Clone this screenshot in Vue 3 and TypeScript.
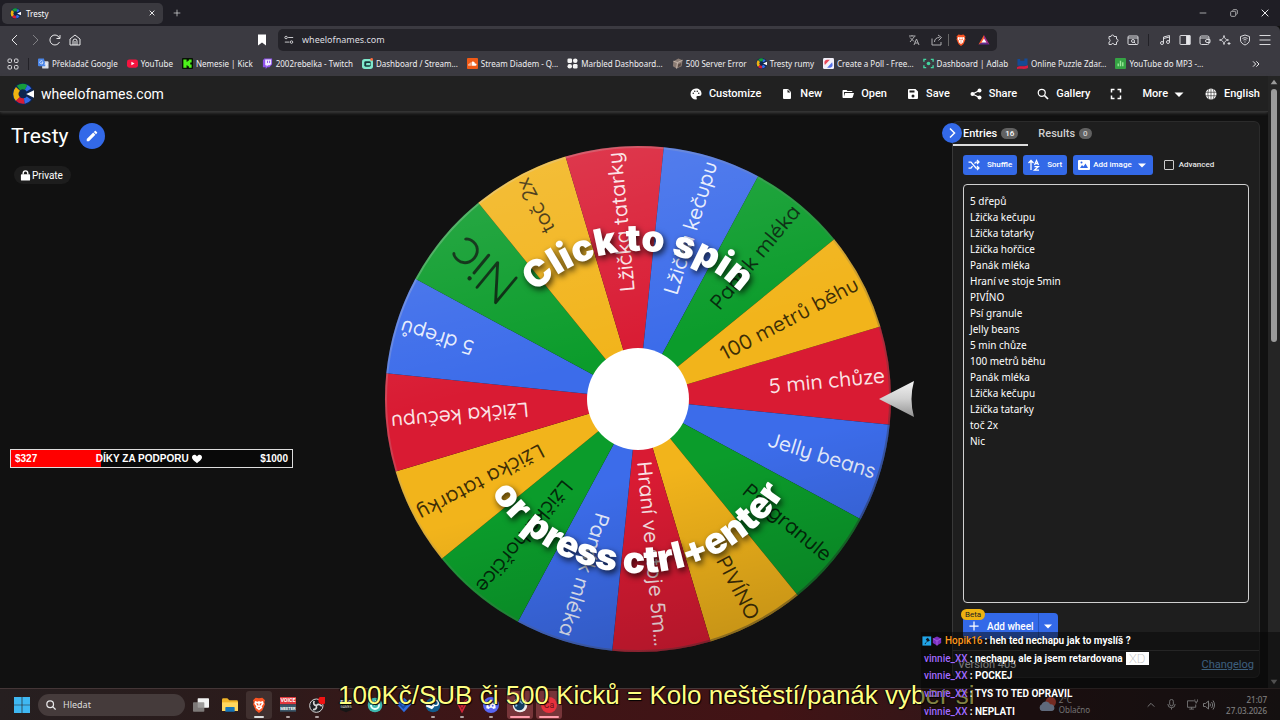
<script setup lang="ts">
import { ref } from 'vue'

interface IconItem {
  label: string
  icon: string
}

const wheelLogo =
  '<circle cx="12" cy="12" r="12" fill="#0d2550"/><g fill="none" stroke-width="6"><path d="M7 5.500A8 8 0 0 1 15.500 4.800" stroke="#169c3c"/><path d="M6.500 17.500A8 8 0 0 1 6.500 6.500" stroke="#eeb211"/><path d="M13.500 19.600A8 8 0 0 1 6.300 17.300" stroke="#d61d35"/><path d="M18.500 16.600A8 8 0 0 1 13.500 19.700" stroke="#3369e8"/><path d="M15.500 4.800A8 8 0 0 1 18.500 7.600" stroke="#3369e8"/></g><path d="M15.500 12 24 8v8z" fill="#fff"/>'

const bookmarks: IconItem[] = [
  { label: 'Překladač Google', icon: '<rect x="9" y="7" width="14" height="16" rx="2" fill="#d9dce2"/><path d="M2 1h11l4 17H2a2 2 0 0 1-2-2V3a2 2 0 0 1 2-2z" fill="#4b86e8"/><path d="M10.500 7.500A3.500 3.500 0 1 0 11 10H8M14 13h7M17.500 11v2M20 13c-1 3-3 5-5 6M15.500 14c1 2 3 4 5 5" fill="none" stroke="#eef3fb" stroke-width="1.600"/>' },
  { label: 'YouTube', icon: '<rect y="3" width="24" height="18" rx="5" fill="#f5133f"/><path d="m9.500 8 7 4-7 4z" fill="#fff"/>' },
  { label: 'Nemesie | Kick', icon: '<rect width="24" height="24" rx="2" fill="#071004"/><path d="M3 3h7v5h2V6h3V3h6v7h-3v4h3v7h-6v-3h-3v-2h-2v5H3z" fill="#4df21b"/>' },
  { label: '2002rebelka - Twitch', icon: '<path d="M5 1h17v13l-6 6h-4l-4 4v-4H2V5z" fill="#8f52ec"/><path d="M7 3h13v10l-3 3h-4l-3 3v-3H7z" fill="#f1eaff"/><path d="M12 6v5M16.500 6v5" stroke="#8f52ec" stroke-width="2"/>' },
  { label: 'Dashboard / Stream...', icon: '<rect y="2" width="24" height="22" rx="6" fill="#7fe9cd"/><rect x="5" y="7" width="14" height="12" rx="3" fill="#16383a"/><rect x="9" y="11" width="9" height="5" rx="1" fill="#7fe9cd"/><circle cx="21" cy="3" r="3" fill="#ff6b3d"/>' },
  { label: 'Stream Diadem - Q...', icon: '<rect width="24" height="24" rx="2" fill="#ef5a17"/><path d="M4 13v4M6.500 11v6M9 9v8" stroke="#fff" stroke-width="1.500"/><path d="M11 8c4-1 6 1 6 4 5-1 5 5 1 5h-7z" fill="#fff"/>' },
  { label: 'Marbled Dashboard...', icon: '<g fill="#f4f4f4"><rect x="1" y="1" width="10" height="10" rx="3"/><circle cx="18" cy="6" r="5"/><circle cx="6" cy="18" r="5"/><rect x="13" y="13" width="10" height="10" rx="3"/></g>' },
  { label: '500 Server Error', icon: '<path d="M3 7 14 1l9 4-2 13-11 5-8-5z" fill="#8b7c74"/><path d="m3 7 9 3 11-5M12 10l-2 13" stroke="#c9b9ad" stroke-width="2" fill="none"/><path d="m13 14 7-3-1 6-6 3z" fill="#5b4b45"/>' },
  { label: 'Tresty rumy', icon: wheelLogo },
  { label: 'Create a Poll - Free...', icon: '<rect width="24" height="24" rx="3" fill="#f2f0fa"/><path d="M3 11a6 6 0 0 1 6-7h6L4 15z" fill="#e8485a"/><path d="m20 9 1 6a6 6 0 0 1-7 6H9z" fill="#5470e8"/>' },
  { label: 'Dashboard | Adlab', icon: '<path d="M2 8V3h5M17 3h5v5M22 16v5h-5M7 21H2v-5" fill="none" stroke="#43d5a0" stroke-width="3"/><circle cx="12" cy="12" r="4" fill="#43d5a0"/>' },
  { label: 'Online Puzzle Zdar...', icon: '<path d="M1 2h6v4h9V1h7v16H1z" fill="#164a94"/><path d="M0 20c8-5 12 1 24-4v6c-9 4-15 0-24 2z" fill="#d61b42"/>' },
  { label: 'YouTube do MP3 -...', icon: '<rect width="24" height="24" rx="2" fill="#35a344"/><path d="M7 18v-6M12 18V6M17 18v-9" stroke="#9bea9b" stroke-width="3"/>' },
]

const extensionIcons: string[] = [
  '<path d="M8 5a3 3 0 0 1 6 0h5v5a3 3 0 0 1 0 6v5h-5c0-3-5-3-5 0H4v-5c3 0 3-6 0-6V5z"/>',
  '<rect x="2" y="4" width="20" height="17" rx="2"/><path d="M2 8h20"/><circle cx="12" cy="14" r="3"/><path d="m14 16 3 3"/>',
]
const sideIcons: string[] = [
  '<path d="M9 18V6l12-3v13M9 9l12-3"/><circle cx="6" cy="18" r="3"/><circle cx="18" cy="16" r="3"/>',
  '<rect x="2" y="3" width="20" height="18" rx="1"/><path d="M15 3h7v18h-7z" fill="#e8e8ea"/>',
  '<rect x="2" y="4" width="18" height="17" rx="3"/><path d="M2 8h18M22 11h-6a3 3 0 0 0 0 6h6z"/>',
  '<path d="M10 3c1 6 3 8 9 9-6 1-8 3-9 9-1-6-3-8-9-9 6-1 8-3 9-9zM20 16v6M17 19h6"/>',
  '<path d="m12 2 9 3v7c0 5-4 8-9 10-5-2-9-5-9-10V5z"/><path d="M7 9c3-2 7-2 10 0M9 12c2-1 4-1 6 0M12 15v2"/>',
]

const navItems: IconItem[] = [
  { label: 'Customize', icon: '<path fill-rule="evenodd" d="M17.5,12A1.5,1.5 0 0,1 16,10.500A1.500,1.500 0 0,1 19,10.500A1.500,1.500 0 0,1 17.500,12M14.500,8A1.500,1.500 0 1,1 14.500,5A1.500,1.500 0 0,1 14.500,8M9.500,8A1.500,1.500 0 1,1 9.500,5A1.500,1.500 0 0,1 9.500,8M6.500,12A1.500,1.500 0 1,1 6.500,9A1.500,1.500 0 0,1 6.500,12M12,1A11,11 0 0,0 1,12A11,11 0 0,0 12,23A1.800,1.800 0 0,0 13.500,20.500C12,18 13,16 15,16H18A5,5 0 0,0 23,11C23,5 18,1 12,1Z"/>' },
  { label: 'New', icon: '<path d="M13,9V3L19,9M6,2C4.9,2 4,2.900 4,4V20A2,2 0 0,0 6,22H18A2,2 0 0,0 20,20V8L14,2Z"/>' },
  { label: 'Open', icon: '<path d="M19,20H3C1.900,20 1,19.100 1,18V6C1,4.900 1.900,4 3,4H9L11,6H19A2,2 0 0,1 21,8H4V17L6.100,10H24L21.500,18.500C21,19.500 20,20 19,20Z"/>' },
  { label: 'Save', icon: '<path fill-rule="evenodd" d="M15,9H5V5H15M12,19A3,3 0 1,1 12,13A3,3 0 0,1 12,19M17,2H4A2,2 0 0,0 2,4V20A2,2 0 0,0 4,22H20A2,2 0 0,0 22,20V7Z"/>' },
  { label: 'Share', icon: '<path d="M19 5 5 12l14 7" fill="none" stroke="#fff" stroke-width="2.500"/><circle cx="19" cy="5" r="4"/><circle cx="5" cy="12" r="4"/><circle cx="19" cy="19" r="4"/>' },
  { label: 'Gallery', icon: '<path d="M15 15l7 7" stroke="#fff" stroke-width="3.500"/><circle cx="9.500" cy="9.500" r="7" fill="none" stroke="#fff" stroke-width="2.500"/>' },
]

const entries = ref<string>(
  [
    '5 dřepů', 'Lžička kečupu', 'Lžička tatarky', 'Lžička hořčice', 'Panák mléka', 'Hraní ve stoje 5min',
    'PIVÍNO', 'Psí granule', 'Jelly beans', '5 min chůze', '100 metrů běhu', 'Panák mléka',
    'Lžička kečupu', 'Lžička tatarky', 'toč 2x', 'Nic',
  ].join('\n'),
)
const advanced = ref<boolean>(false)

const sliceLabels: string[] = [
  '5 min chůze', 'Jelly beans', 'Psí granule', 'PIVÍNO', 'Hraní ve stoje 5m...', 'Panák mléka',
  'Lžička hořčice', 'Lžička tatarky', 'Lžička kečupu', '5 dřepů', 'Nic', 'toč 2x',
  'Lžička tatarky', 'Lžička kečupu', 'Panák mléka', '100 metrů běhu',
]
const sliceColors: string[] = ['#d91b33', '#3c6cea', '#0b9c2b', '#f2b41b']
const radius = 253
const step = 360 / sliceLabels.length
const firstAngle = -5.4

function point(angle: number): string {
  const rad = (angle * Math.PI) / 180
  return `${(Math.cos(rad) * radius).toFixed(2)} ${(Math.sin(rad) * radius).toFixed(2)}`
}

const slices = sliceLabels.map((label, i) => {
  const angle = firstAngle + i * step
  const dark = i % 4 > 1
  const large = label.length < 4
  return {
    label,
    angle,
    fill: sliceColors[i % 4],
    path: `M0 0L${point(angle - step / 2)}A${radius} ${radius} 0 0 1 ${point(angle + step / 2)}Z`,
    textClass: ['slice-text', dark ? 'dark' : 'light', large ? 'large' : ''],
    end: large ? 238 : 248,
    baseline: large ? 17 : 7,
  }
})

const chat = [
  { user: 'Hopik16', color: '#ff9a1f', text: 'heh ted nechapu jak to myslíš ?', badges: true, emote: false },
  { user: 'vinnie_XX', color: '#a36bff', text: 'nechapu, ale ja jsem retardovana', badges: false, emote: true },
  { user: 'vinnie_XX', color: '#a36bff', text: 'POCKEJ', badges: false, emote: false },
  { user: 'vinnie_XX', color: '#a36bff', text: 'TYS TO TED OPRAVIL', badges: false, emote: false },
  { user: 'vinnie_XX', color: '#a36bff', text: 'NEPLATI', badges: false, emote: false },
]

const brave = '<path d="m7 1 5 1 5-1 4 4-1 3 1 3-4 9-5 4-5-4-4-9 1-3-1-3z" fill="#fb5423"/><path d="m6 6 4 1 2-1 2 1 4-1 1 4-3 4 1 2-5 4-5-4 1-2-3-4z" fill="#fff"/><path d="m8 9 3 1v3l-2-1zM16 9l-3 1v3l2-1zM10 16l2-1 2 1-2 1z" fill="#fb5423"/>'

const apps = [
  { name: 'Task view', state: '', icon: '<rect x="7" y="2" width="17" height="14" rx="1" fill="#f3f3f3"/><rect y="8" width="17" height="14" rx="1" fill="#8c8988" opacity=".85"/>' },
  { name: 'Explorer', state: '', icon: '<path d="M0 4a2 2 0 0 1 2-2h6l3 3h11a2 2 0 0 1 2 2v14H0z" fill="#f0b429"/><path d="M0 8h24v13H0z" fill="#ffd75e"/><path d="M5 22v-6a1 1 0 0 1 1-1h12a1 1 0 0 1 1 1v6z" fill="#1675b8"/>' },
  { name: 'Brave', state: 'active', icon: brave },
  { name: 'Voicemeeter', state: 'running', icon: '<rect width="24" height="11" fill="#e2383d"/><rect y="11" width="24" height="11" fill="#3a5668"/><text x="12" y="8" text-anchor="middle" font-family="Roboto" font-weight="700" font-size="8" fill="#fff">VOICE</text><text x="12" y="20" text-anchor="middle" font-family="Roboto" font-weight="700" font-size="6" fill="#fff">MEETER</text>' },
  { name: 'OBS', state: 'running', icon: '<circle cx="11" cy="13" r="10" fill="#1f1f22" stroke="#d5d5d5" stroke-width="1.500"/><path d="M11 13c-4-1-5-4-3-7M11 13c3-3 6-2 8 1M11 13c1 4-1 6-5 6" fill="none" stroke="#d5d5d5" stroke-width="2.500"/><circle cx="20" cy="5" r="6" fill="#f01313"/>' },
  { name: 'Epic', state: '', icon: '<path d="M3 1h18v18l-9 4-9-4z" fill="#161616"/><text x="12" y="10" text-anchor="middle" font-family="Roboto" font-weight="700" font-size="8" fill="#ddd">EPIC</text><text x="12" y="17" text-anchor="middle" font-family="Roboto" font-size="5" fill="#ddd">GAMES</text>' },
  { name: 'Sync', state: '', icon: '<circle cx="12" cy="12" r="11" fill="#3db7ae"/><path d="M6 12a6 6 0 1 0 6-6M12 12l-4-4" fill="none" stroke="#e6fffb" stroke-width="3"/>' },
  { name: 'Shield', state: '', icon: '<path d="m12 1 11 10-11 12L1 11z" fill="#2c6be0"/><path d="m6 11 5 5 7-8" fill="none" stroke="#174a9f" stroke-width="3"/>' },
  { name: 'Steam', state: 'running', icon: '<circle cx="12" cy="12" r="11" fill="#125c8d"/><circle cx="16" cy="9" r="4" fill="none" stroke="#fff" stroke-width="2"/><path d="m2 12 8 4 3-3" stroke="#fff" stroke-width="4" fill="none"/>' },
  { name: 'Valorant', state: 'running', icon: '<path d="m2 2 10 20L22 2l-6 5-4 8-4-8z" fill="none" stroke="#d12437" stroke-width="2.500"/>' },
  { name: 'Discord', state: 'running', icon: '<circle cx="12" cy="12" r="12" fill="#5865f2"/><path d="M5 17c0-5 1-8 3-9l3 1h2l3-1c2 1 3 4 3 9l-4 1-1-2h-4l-1 2z" fill="#fff"/><circle cx="9.500" cy="13" r="1.500" fill="#5865f2"/><circle cx="14.500" cy="13" r="1.500" fill="#5865f2"/>' },
  { name: 'Steelseries', state: 'open', icon: '<circle cx="12" cy="12" r="11" fill="#eee"/><circle cx="11" cy="12" r="8" fill="#123e61"/><path d="M7 14a5 5 0 1 1 9-4" stroke="#89c9f2" stroke-width="3" fill="none"/>' },
  { name: 'Creative', state: 'open', icon: '<circle cx="12" cy="12" r="12" fill="#e8313d"/><text x="12" y="17" text-anchor="middle" font-family="Roboto" font-size="13" fill="#691119">Ca</text>' },
]
</script>

<template>
  <div class="screen">
    <div class="tab-strip">
      <div class="tab">
        <svg class="ico11" viewBox="0 0 24 24" v-html="wheelLogo"></svg>
        <span class="tab-title">Tresty</span>
        <button class="plain" aria-label="Close tab"><svg class="ico8" viewBox="0 0 24 24"><path class="line bold" d="m5 5 14 14M19 5 5 19" /></svg></button>
      </div>
      <button class="plain new-tab" aria-label="New tab"><svg class="ico8" viewBox="0 0 24 24"><path class="line" d="M12 2v20M2 12h20" /></svg></button>
      <div class="window-controls">
        <button class="plain" aria-label="Minimize"><svg class="ico8" viewBox="0 0 24 24"><path class="line" d="M2 12h20" /></svg></button>
        <button class="plain" aria-label="Restore"><svg class="ico8" viewBox="0 0 24 24"><path class="line" d="M8 5c0-2 1-3 3-3h7c3 0 4 1 4 4v7c0 2-1 3-3 3" /><rect class="line" x="2" y="7" width="15" height="15" rx="3" /></svg></button>
        <button class="plain" aria-label="Close"><svg class="ico8" viewBox="0 0 24 24"><path class="line bold" d="m2 2 20 20M22 2 2 22" /></svg></button>
      </div>
    </div>

    <div class="toolbar">
      <div class="nav-buttons">
        <button class="plain" aria-label="Back"><svg class="ico12" viewBox="0 0 24 24"><path class="line" d="M16 2 6 12l10 10" /></svg></button>
        <button class="plain dim" aria-label="Forward"><svg class="ico12" viewBox="0 0 24 24"><path class="line" d="m8 2 10 10L8 22" /></svg></button>
        <button class="plain" aria-label="Reload"><svg class="ico12" viewBox="0 0 24 24"><path class="line" d="M21 16a10 10 0 1 1 0-8M22 2v7h-7" /></svg></button>
        <button class="plain" aria-label="Home"><svg class="ico12" viewBox="0 0 24 24"><path class="line" d="M2 10 12 2l10 8v12H2zM8 22v-8a4 4 0 0 1 8 0v8M12 14v8" /></svg></button>
      </div>
      <button class="plain bookmark-flag" aria-label="Bookmark this page"><svg class="ico12" viewBox="0 0 24 24"><path d="M4 1h16v22l-8-6-8 6z" fill="#fff" /></svg></button>
      <div class="address">
        <svg class="ico10" viewBox="0 0 24 24"><path class="line" d="M10 6h12M2 17h11" /><circle class="line" cx="5" cy="6" r="3" /><circle class="line" cx="18" cy="17" r="3" /></svg>
        <input class="url" type="text" value="wheelofnames.com" aria-label="Address" />
        <svg class="ico12 soft" viewBox="0 0 24 24"><path class="line" d="M2 4h13M8 2v2M4 16 13 5M4 7l8 8M12 22l5-12 5 12M14 18h6" /></svg>
        <svg class="ico12 soft" viewBox="0 0 24 24"><path class="line" d="M2 9v13h18v-6M7 16c0-6 4-9 10-9M14 2l7 5-6 6" /></svg>
        <span class="address-sep"></span>
        <svg class="ico12" viewBox="0 0 24 24" v-html="brave"></svg>
        <svg class="ico12 bat" viewBox="0 0 24 24"><path d="M12 2 1 21l11-5z" fill="#fb5a2b" /><path d="m12 2 11 19-11-5z" fill="#a22b88" /><path d="m1 21 11-6 11 6z" fill="#642b91" /><path d="m12 9 5 8H7z" fill="#fff" /></svg>
      </div>
      <div class="tool-icons">
        <svg v-for="(icon, i) in extensionIcons" :key="i" class="ico12 outline" viewBox="0 0 24 24" v-html="icon"></svg>
        <span class="tool-sep"></span>
        <svg v-for="(icon, i) in sideIcons" :key="'s' + i" class="ico12 outline" viewBox="0 0 24 24" v-html="icon"></svg>
        <svg class="ico12 outline" viewBox="0 0 24 24"><path d="M1 3h22M1 12h22M1 21h22" /></svg>
      </div>
    </div>

    <nav class="bookmarks">
      <svg class="ico12 outline" viewBox="0 0 24 24"><rect x="2" y="2" width="7" height="7" rx="2" /><rect x="15" y="2" width="7" height="7" rx="2" /><rect x="2" y="15" width="7" height="7" rx="2" /><rect x="15" y="15" width="7" height="7" rx="2" /></svg>
      <span class="tool-sep"></span>
      <div class="bookmark-list">
        <a v-for="item in bookmarks" :key="item.label" class="bookmark" href="#">
          <svg class="ico11" viewBox="0 0 24 24" v-html="item.icon"></svg>{{ item.label }}
        </a>
      </div>
      <button class="plain overflow" aria-label="More bookmarks"><svg class="ico8" viewBox="0 0 24 24"><path class="line bold" d="m3 4 8 8-8 8M13 4l8 8-8 8" /></svg></button>
    </nav>

    <div class="page">
      <div class="site">
        <header class="site-header">
          <a class="brand" href="#"><svg class="brand-logo" viewBox="0 0 24 24" v-html="wheelLogo"></svg>wheelofnames.com</a>
          <nav class="site-nav">
            <button v-for="item in navItems" :key="item.label" class="nav-item">
              <svg class="ico12 solid" viewBox="0 0 24 24" v-html="item.icon"></svg>{{ item.label }}
            </button>
            <button class="nav-item" aria-label="Fullscreen"><svg class="ico12" viewBox="0 0 24 24"><path d="M3 9V3h6M15 3h6v6M21 15v6h-6M9 21H3v-6" fill="none" stroke="#fff" stroke-width="3" /></svg></button>
            <button class="nav-item more">More<svg class="ico12 solid" viewBox="0 0 24 24"><path d="M3 9h18l-9 9z" /></svg></button>
            <button class="nav-item"><svg class="ico12" viewBox="0 0 24 24"><circle cx="12" cy="12" r="11" fill="#fff" /><path d="M1 8.500h22M1 15.500h22M12 1v22M8 1c-3 7-3 15 0 22M16 1c3 7 3 15 0 22" fill="none" stroke="#222" stroke-width="1.200" /></svg>English</button>
          </nav>
        </header>

        <main class="main">
          <section class="info">
            <div class="title-row">
              <h1>Tresty</h1>
              <button class="edit" aria-label="Edit title"><svg class="ico14 solid" viewBox="0 0 24 24"><path d="M20.700,7C21.100,6.600 21.100,6 20.700,5.600L18.400,3.300C18,2.900 17.400,2.900 17,3.300L15.100,5.100L18.900,8.900M3,17.200V21H6.800L17.800,9.900L14.100,6.200Z" /></svg></button>
            </div>
            <span class="private"><svg class="ico11 solid" viewBox="0 0 24 24"><path d="M4 9h16a2 2 0 0 1 2 2v10a2 2 0 0 1-2 2H4a2 2 0 0 1-2-2V11a2 2 0 0 1 2-2z" /><path d="M7 10V7a5 5 0 0 1 10 0v3" fill="none" stroke="#fff" stroke-width="3" /></svg>Private</span>
          </section>

          <section class="wheel-area">
            <svg class="wheel" viewBox="-298 -287 596 576" role="img" aria-label="Wheel">
              <defs>
                <linearGradient id="gloss" x1="0.35" y1="0" x2="0.6" y2="1">
                  <stop offset="0" stop-color="#fff" stop-opacity=".13" />
                  <stop offset=".42" stop-color="#fff" stop-opacity="0" />
                  <stop offset=".65" stop-color="#000" stop-opacity="0" />
                  <stop offset="1" stop-color="#000" stop-opacity=".18" />
                </linearGradient>
                <linearGradient id="rim" x1="0" y1="0" x2="1" y2="1">
                  <stop offset="0" stop-color="#fff" stop-opacity=".3" />
                  <stop offset=".5" stop-color="#777" stop-opacity=".2" />
                  <stop offset="1" stop-color="#000" stop-opacity=".5" />
                </linearGradient>
                <linearGradient id="metal" x1="0" y1="0" x2="0" y2="1">
                  <stop offset="0" stop-color="#f2f2f2" />
                  <stop offset=".5" stop-color="#d0d0d0" />
                  <stop offset="1" stop-color="#929292" />
                </linearGradient>
                <path id="arc-top" d="M-148 0A148 148 0 0 1 148 0" />
                <path id="arc-bottom" d="M-174 0A174 174 0 0 0 174 0" />
              </defs>
              <path v-for="(slice, i) in slices" :key="'p' + i" :d="slice.path" :fill="slice.fill" />
              <text v-for="(slice, i) in slices" :key="'t' + i" :class="slice.textClass" :x="slice.end" :y="slice.baseline" :transform="`rotate(${slice.angle})`">{{ slice.label }}</text>
              <circle r="253" fill="url(#gloss)" />
              <circle r="252" fill="none" stroke="url(#rim)" stroke-width="2" />
              <circle r="51" fill="#fff" />
              <path d="M241 0 276-18Q271 0 276 18z" fill="url(#metal)" />
              <text class="spin-text"><textPath href="#arc-top" startOffset="50%">Click to spin</textPath></text>
              <text class="spin-text"><textPath href="#arc-bottom" startOffset="50%">or press ctrl+enter</textPath></text>
            </svg>
          </section>

          <aside class="side">
            <button class="collapse" aria-label="Hide panel"><svg class="ico12" viewBox="0 0 24 24"><path d="m8 3 9 9-9 9" fill="none" stroke="#fff" stroke-width="3" /></svg></button>
            <div class="panel">
              <div class="tabs" role="tablist">
                <button class="ptab selected" role="tab">Entries <span class="count">16</span></button>
                <button class="ptab" role="tab">Results <span class="count">0</span></button>
              </div>
              <div class="panel-body">
                <div class="actions">
                  <button class="blue"><svg class="ico12" viewBox="0 0 24 24"><path d="M1 6h5l10 12h6M1 18h5l3-4M13 9l3-3h6M18 2l4 4-4 4M18 14l4 4-4 4" fill="none" stroke="#fff" stroke-width="2.500" /></svg><span>Shuffle</span></button>
                  <button class="blue"><svg class="ico12" viewBox="0 0 24 24"><path d="M6 22V4M1 8l5-5 5 5M13 12l4-9 4 9M14 9h6M13 15h8l-8 7h9" fill="none" stroke="#fff" stroke-width="2.500" /></svg><span>Sort</span></button>
                  <button class="blue image-btn"><svg class="ico12 solid" viewBox="0 0 24 24"><path fill-rule="evenodd" d="M22,2H2A2,2 0 0,0 0,4V20A2,2 0 0,0 2,22H22A2,2 0 0,0 24,20V4A2,2 0 0,0 22,2M4,18L8,12L11,15L15,9L20,18Z" /><circle cx="7" cy="7" r="2" fill="#2d66e4" /></svg><span>Add image</span><svg class="ico12 solid caret" viewBox="0 0 24 24"><path d="M4 9h16l-8 8z" /></svg></button>
                  <label class="advanced"><input v-model="advanced" type="checkbox" />Advanced</label>
                </div>
                <textarea v-model="entries" class="entries" aria-label="Entries" spellcheck="false"></textarea>
                <div class="add-wheel">
                  <span class="beta">Beta</span>
                  <button class="add-main"><svg class="ico10" viewBox="0 0 24 24"><path d="M12 1v22M1 12h22" stroke="#fff" stroke-width="3" /></svg>Add wheel</button>
                  <button class="add-more" aria-label="More add options"><svg class="ico12 solid" viewBox="0 0 24 24"><path d="M4 9h16l-8 8z" /></svg></button>
                </div>
              </div>
              <footer class="panel-footer"><span>Version 405</span><a href="#">Changelog</a></footer>
            </div>
          </aside>
        </main>
      </div>
      <div class="scrollbar">
        <svg class="ico8" viewBox="0 0 24 24"><path d="m12 5 10 14H2z" fill="#9b9b9b" /></svg>
        <div class="thumb"></div>
        <svg class="ico8 last" viewBox="0 0 24 24"><path d="M12 19 2 5h20z" fill="#9b9b9b" /></svg>
      </div>
    </div>

    <footer class="taskbar">
      <button class="plain start" aria-label="Start"><svg class="ico16" viewBox="0 0 24 24"><path d="M0 0h11.500v11.500H0zM12.500 0H24v11.500H12.500zM0 12.500h11.500V24H0zM12.500 12.500H24V24H12.500z" fill="#3fb8f2" /></svg></button>
      <label class="search"><svg class="ico10" viewBox="0 0 24 24"><circle class="line bold" cx="10" cy="10" r="8" /><path class="line bold" d="m16 16 7 7" /></svg><input type="text" placeholder="Hledat" aria-label="Hledat" /></label>
      <div class="apps">
        <button v-for="app in apps" :key="app.name" :class="['app', app.state]" :aria-label="app.name"><svg class="ico16" viewBox="0 0 24 24" v-html="app.icon"></svg></button>
      </div>
      <div class="tray">
        <div class="weather">
          <svg class="ico18" viewBox="0 0 24 24"><circle cx="17" cy="8" r="7" fill="#e2503f" /><path d="M5 20a5 5 0 0 1 0-9c2-5 9-5 11 0 7-1 8 9 2 9z" fill="#b9cdf0" /></svg>
          <span>2°C<br />Oblačno</span>
        </div>
        <svg class="ico8" viewBox="0 0 24 24"><path class="line bold" d="m2 17 10-10 10 10" /></svg>
        <svg class="ico11 mic" viewBox="0 0 24 24"><rect class="line" x="8" y="1" width="8" height="14" rx="4" /><path class="line" d="M4 11a8 8 0 0 0 16 0M12 19v4" /></svg>
        <svg class="ico11" viewBox="0 0 24 24"><path class="line" d="M15 4H1v14h18v-6M5 22h10M10 18v4M20 10V6M17 1v3a3 3 0 0 0 6 0V1" /></svg>
        <svg class="ico12" viewBox="0 0 24 24"><path class="line" d="M1 9h4l6-5v16l-6-5H1zM14 9c1 2 1 4 0 6M17 6c3 4 3 8 0 12M20 3c4 6 4 12 0 18" /></svg>
        <time class="clock">21:07<br />27.03.2026</time>
      </div>
    </footer>

    <div class="donation"><div class="donation-fill"></div><span>$327</span><strong>DÍKY ZA PODPORU <svg class="heart" viewBox="0 0 24 24"><path d="M12 22C3 15 0 12 0 8c0-7 9-8 12-2 3-6 12-5 12 2 0 4-3 7-12 14z" fill="#fff" /></svg></strong><span>$1000</span></div>
    <div class="caption">100Kč/SUB či 500 Kicků = Kolo neštěstí/panák vyber si</div>
    <div class="chat">
      <div v-for="(line, i) in chat" :key="i" class="chat-line">
        <svg v-if="line.badges" class="badges" viewBox="0 0 48 24"><rect x="1" y="1" width="21" height="22" fill="#21a5e8" /><path d="m6 19 6-7-3-4 5-4 5 7-5 3-2-1-4 7z" fill="#101820" /><path d="m36 1 10 5v11l-10 6-10-6V6z" fill="#7b2fc0" /><path d="m26 6 10 6 10-6M36 12v11" stroke="#a661e0" stroke-width="2" fill="none" /></svg>
        <b class="user" :style="{ color: line.color }">{{ line.user }}</b>
        <span class="message">: {{ line.text }}</span>
        <span v-if="line.emote" class="emote">XD</span>
      </div>
    </div>
  </div>
</template>

<style>
body { background: #111; overflow: hidden; }
</style>

<style scoped>
* { box-sizing: border-box; }
.screen { position: relative; display: flex; flex-direction: column; height: 100vh; background: #111; color: #fff; font-family: Roboto, "Liberation Sans", sans-serif; font-size: 11px; overflow: hidden; }
button { font: inherit; color: inherit; border: 0; padding: 0; margin: 0; background: none; cursor: pointer; }
a { color: inherit; text-decoration: none; }
svg { display: block; flex: none; }
.ico8 { width: 8px; height: 8px; }
.ico10 { width: 10px; height: 10px; }
.ico11 { width: 11px; height: 11px; }
.ico12 { width: 12px; height: 12px; }
.ico14 { width: 14px; height: 14px; }
.ico16 { width: 16px; height: 16px; }
.ico18 { width: 18px; height: 18px; }
.line { fill: none; stroke: #e8e8ea; stroke-width: 2; }
.line.bold { stroke-width: 3; }
.outline { fill: none; stroke: #d8d8dc; stroke-width: 2; }
.solid { fill: #fff; }
.soft { opacity: .7; }
.plain { display: flex; align-items: center; justify-content: center; }

.tab-strip { display: flex; align-items: center; height: 26px; flex: none; background: #1f1e25; padding: 0 11px 0 2px; }
.tab { display: flex; align-items: center; width: 161px; height: 21px; padding: 0 7px 0 8px; border-radius: 5px; background: #3a393f; }
.tab-title { flex: 1; padding-left: 5px; font-family: "Noto Sans", sans-serif; font-size: 8px; }
.new-tab { margin-left: 10px; }
.window-controls { display: flex; gap: 23px; margin-left: auto; }

.toolbar { display: flex; align-items: center; height: 27px; flex: none; background: #3b3a41; border-top-right-radius: 5px; padding: 0 9px; }
.nav-buttons { display: flex; gap: 8px; }
.dim { opacity: .4; }
.bookmark-flag { margin-left: 175px; }
.address { display: flex; align-items: center; flex: 1; height: 22px; margin: 0 110px 0 10px; padding: 0 7px 0 6px; border-radius: 5px; background: #242329; }
.url { flex: 1; min-width: 0; border: 0; outline: 0; padding: 0 0 0 8px; background: none; color: #dedee0; font-family: "Noto Sans", sans-serif; font-size: 9px; }
.address .soft { margin-left: 11px; }
.address-sep { width: 1px; height: 12px; margin: 0 6px 0 5px; background: #666; }
.bat { margin-left: 11px; }
.tool-icons { display: flex; align-items: center; gap: 8px; }
.tool-sep { width: 1px; height: 12px; margin: 0 2px 0 1px; background: #222127; }

.bookmarks { display: flex; align-items: center; height: 23px; flex: none; background: #3b3a41; padding: 0 20px 2px 7px; font-family: "Noto Sans", sans-serif; font-size: 8px; color: #f0f0f2; }
.bookmarks .tool-sep { margin: 0 9px 0 9px; }
.bookmark-list { display: flex; align-items: center; gap: 9px; white-space: nowrap; }
.bookmark { display: flex; align-items: center; gap: 3px; }
.overflow { margin-left: auto; }

.page { display: flex; flex: 1; min-height: 0; }
.site { display: flex; flex-direction: column; flex: 1; min-width: 0; }
.site-header { display: flex; align-items: center; justify-content: space-between; height: 36px; flex: none; padding: 0 8px 0 12px; background: #212121; border-bottom: 1px solid #333; box-shadow: 0 1px 3px #3d3d3d; }
.brand { display: flex; align-items: center; gap: 7px; font-size: 14px; }
.brand-logo { width: 22px; height: 22px; }
.site-nav { display: flex; align-items: center; gap: 20px; }
.nav-item { display: flex; align-items: center; gap: 7px; font-weight: 500; font-size: 11px; }
.nav-item.more { gap: 5px; }
.main { display: grid; grid-template-columns: 340px minmax(0, 1fr) 332px; flex: 1; min-height: 0; }
.info { padding: 11px; }
.title-row { display: flex; align-items: center; gap: 11px; }
h1 { margin: 0; font-size: 21px; line-height: 26px; font-weight: 400; }
.edit { display: grid; place-items: center; width: 26px; height: 26px; border-radius: 50%; background: #3369e8; }
.private { display: inline-flex; align-items: center; gap: 1px; height: 18px; margin-top: 17px; margin-left: 3px; padding: 0 8px 0 6px; border-radius: 9px; background: #1d1d1d; font-size: 10px; }

.wheel-area { min-height: 0; }
.wheel { width: 100%; height: 100%; }
.slice-text { font-family: Quicksand, Lato, sans-serif; font-size: 21px; font-weight: 500; text-anchor: end; }
.slice-text.large { font-size: 50px; font-weight: 400; }
.light { fill: #fff; fill-opacity: .88; }
.dark { fill: #000; fill-opacity: .75; }
.spin-text { font-family: Inter, sans-serif; font-weight: 900; font-size: 37px; fill: #fff; text-anchor: middle; filter: drop-shadow(2px 3px 3px rgba(0, 0, 0, .75)); }

.side { position: relative; padding: 9px 8px 10px 16px; min-height: 0; }
.collapse { position: absolute; z-index: 1; left: 6px; top: 11px; width: 20px; height: 20px; display: grid; place-items: center; border-radius: 50%; background: #3369e8; }
.panel { display: flex; flex-direction: column; height: 100%; border: 1px solid #2b2b2b; border-left-color: #383838; border-radius: 6px; background: #1e1e1e; }
.tabs { display: flex; height: 24px; flex: none; }
.ptab { display: flex; align-items: center; gap: 4px; padding: 0 10px; border-bottom: 2px solid transparent; font-weight: 500; color: #d0d0d0; }
.ptab.selected { border-bottom-color: #ddd; color: #fff; }
.count { padding: 0 4px; border-radius: 6px; background: #616161; font-size: 8px; line-height: 11px; }
.panel-body { display: flex; flex-direction: column; flex: 1; min-height: 0; padding: 8px 10px 11px; }
.actions { display: flex; align-items: center; gap: 6px; height: 21px; font-size: 8px; font-weight: 500; }
.blue { display: flex; align-items: center; gap: 7px; height: 20px; padding: 0 5px; border-radius: 3px; background: #3369e8; }
.image-btn { gap: 3px; }
.caret { margin-left: 1px; }
.advanced { display: flex; align-items: center; gap: 5px; margin-left: 5px; color: #e6e6e6; }
.advanced input { appearance: none; width: 10px; height: 10px; margin: 0; border: 1px solid #ccc; border-radius: 1px; }
.entries { flex: 1; min-height: 0; width: 100%; margin: 9px 0 10px; padding: 8px 6px; resize: none; outline: 0; border: 1px solid #d0d0d0; border-radius: 4px; background: #1d1d1d; color: #fff; font-family: "Noto Sans", sans-serif; font-size: 10px; line-height: 16px; }
.add-wheel { position: relative; display: flex; align-self: flex-start; height: 26px; flex: none; border-radius: 4px; background: #3369e8; font-size: 10px; font-weight: 500; }
.add-main { display: flex; align-items: center; gap: 8px; padding: 0 4px 0 6px; }
.add-more { width: 20px; display: grid; place-items: center; border-left: 1px solid #2552bb; }
.beta { position: absolute; left: -2px; top: -4px; padding: 0 4px; border-radius: 6px; background: #eeb211; color: #222; font-size: 8px; line-height: 11px; font-weight: 400; }
.panel-footer { display: flex; align-items: center; justify-content: space-between; height: 27px; flex: none; padding: 0 5px; border-top: 1px solid #444; color: #eee; }
.panel-footer a { color: #74b8f0; text-decoration: underline; }
.scrollbar { display: flex; flex-direction: column; align-items: center; width: 12px; flex: none; padding: 2px 0; background: #252525; }
.thumb { width: 6px; height: 253px; margin-top: 3px; border-radius: 3px; background: #9b9b9b; }
.last { margin-top: auto; }

.taskbar { display: flex; align-items: center; height: 32px; flex: none; padding: 0 13px 0 14px; border-top: 1px solid #443637; background: linear-gradient(90deg, #261f20, #2b1b1b 20%, #3c1617 33%, #421315 60%, #321618 75%, #231a1b); font-family: "Noto Sans", sans-serif; font-size: 8px; }
.search { display: flex; align-items: center; gap: 7px; width: 147px; height: 22px; margin: 0 8px; padding: 0 8px; border-radius: 11px; background: #453b3b; }
.search input { min-width: 0; flex: 1; border: 0; padding: 0; outline: 0; background: none; color: #ddd; font: inherit; font-size: 9px; }
.search input::placeholder { color: #ddd; opacity: 1; }
.apps { display: flex; gap: 3px; margin-left: -5px; }
.app { position: relative; display: grid; place-items: center; width: 26px; height: 28px; border-radius: 3px; }
.app.active { background: #40302f; }
.app.open { background: #773539; }
.app.running::after, .app.active::after, .app.open::after { content: ""; position: absolute; left: 50%; bottom: 1px; width: 4px; height: 2px; transform: translateX(-50%); border-radius: 1px; background: #b0a3a3; }
.app.active::after { width: 10px; background: #ddd; }
.app.open::after { width: 20px; background: #ff9caa; }
.tray { display: flex; align-items: center; gap: 5px; margin-left: auto; }
.weather { display: flex; align-items: center; gap: 3px; margin-right: 52px; line-height: 10px; color: #ddd; }
.mic { margin: 0 5px 0 6px; }
.clock { margin-left: 6px; text-align: right; line-height: 11px; color: #fff; }

.donation { position: absolute; left: 10px; top: 449px; width: 283px; height: 19px; display: flex; align-items: center; justify-content: space-between; padding: 0 4px; border: 1px solid #ddd; background: #090909; font-family: "Liberation Sans", sans-serif; font-size: 10px; font-weight: 700; }
.donation-fill { position: absolute; left: 0; top: 0; bottom: 0; width: 32%; background: #f00; }
.donation span, .donation strong { position: relative; display: flex; align-items: center; gap: 3px; }
.heart { width: 10px; height: 10px; }
.caption { position: absolute; left: 338px; bottom: 11px; white-space: nowrap; font-family: "Liberation Sans", sans-serif; font-size: 26px; line-height: 28px; color: #ffff82; text-shadow: 1px 1px 1px #000, -1px 0 1px #000; }
.chat { position: absolute; right: 0; bottom: 0; width: 359px; height: 88px; display: flex; flex-direction: column; padding-left: 3px; background: rgba(5, 5, 5, .5); font-size: 10px; font-weight: 700; text-shadow: 0 0 1px #000; }
.chat-line { display: flex; align-items: center; flex: 1; gap: 2px; white-space: nowrap; }
.badges { width: 20px; height: 10px; margin: 0 1px 0 -2px; }
.user { font-weight: 500; }
.emote { width: 23px; height: 13px; margin-left: 1px; background: #fff; color: #999; font-size: 13px; line-height: 13px; font-weight: 100; text-align: center; text-shadow: none; }
</style>
